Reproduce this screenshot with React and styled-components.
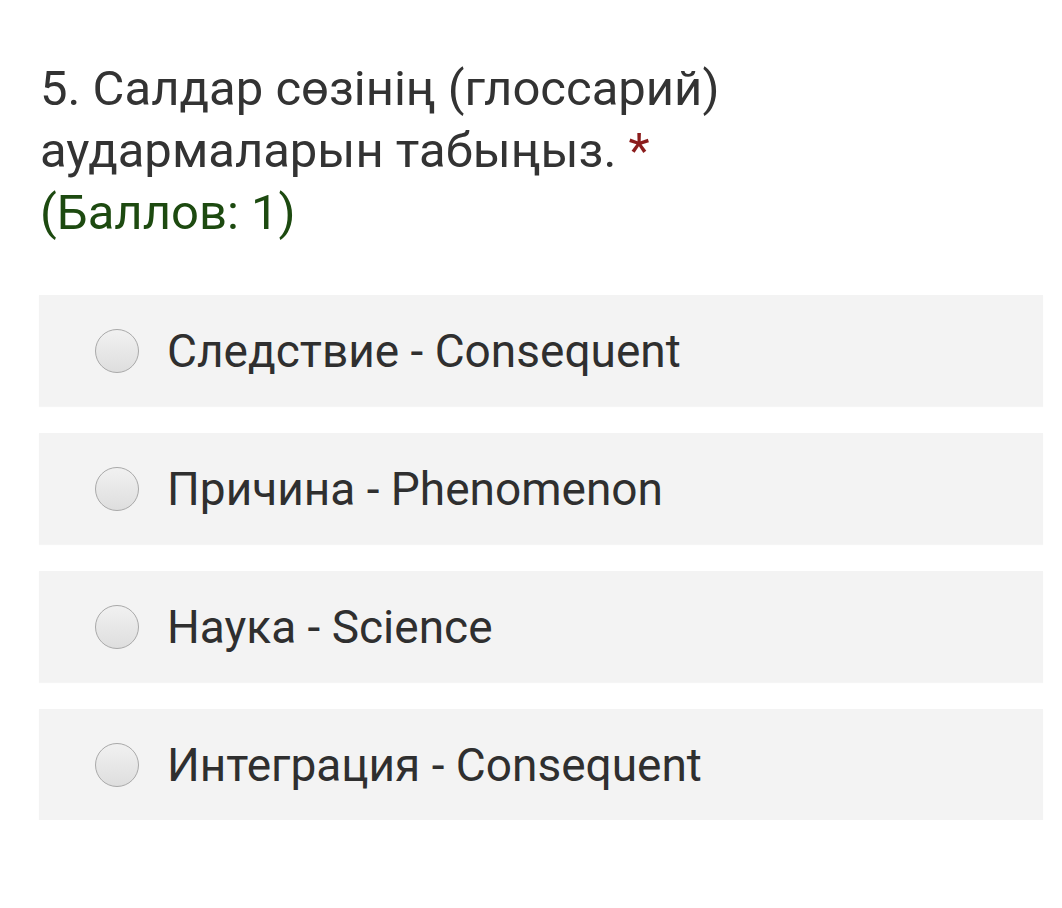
import styled, { createGlobalStyle } from 'styled-components';

const GlobalStyle = createGlobalStyle`
	html, body {
		margin: 0;
		padding: 0;
		background: #ffffff;
	}
	body {
		font-family: Roboto, "Noto Sans", sans-serif;
	}
`;

const Page = styled.div`
	display: flex;
	flex-direction: column;
	padding: 58px 19px 0 39px;
`;

const Question = styled.div`
	font-size: 49px;
	line-height: 62px;
	color: #333333;
	padding-left: 1px;
	max-width: 740px;
`;

const Required = styled.span`
	color: #8b1c1c;
`;

const Points = styled.div`
	color: #1d4a10;
`;

const Options = styled.div`
	display: flex;
	flex-direction: column;
	gap: 27px;
	margin-top: 51px;
`;

const Option = styled.label`
	display: flex;
	align-items: center;
	height: 111px;
	padding-left: 56px;
	background: #f3f3f3;
	box-shadow: 0 1px 1px rgba(0, 0, 0, 0.04);
`;

const Radio = styled.span`
	width: 42px;
	height: 42px;
	border-radius: 50%;
	border: 1px solid #a9a9a9;
	background: linear-gradient(#f1f1f1, #dedede);
	flex-shrink: 0;
`;

const OptionText = styled.span`
	margin-left: 28px;
	font-size: 46px;
	color: #2f2f2f;
`;

const answers = [
	'Следствие - Consequent',
	'Причина - Phenomenon',
	'Наука - Science',
	'Интеграция - Consequent',
];

export default function App() {
	return (
		<>
			<GlobalStyle />
			<Page>
				<Question>
					5. Салдар сөзінің (глоссарий) аудармаларын табыңыз. <Required>*</Required>
					<Points>(Баллов: 1)</Points>
				</Question>
				<Options>
					{answers.map(text => (
						<Option key={text}>
							<Radio />
							<OptionText>{text}</OptionText>
						</Option>
					))}
				</Options>
			</Page>
		</>
	);
}
